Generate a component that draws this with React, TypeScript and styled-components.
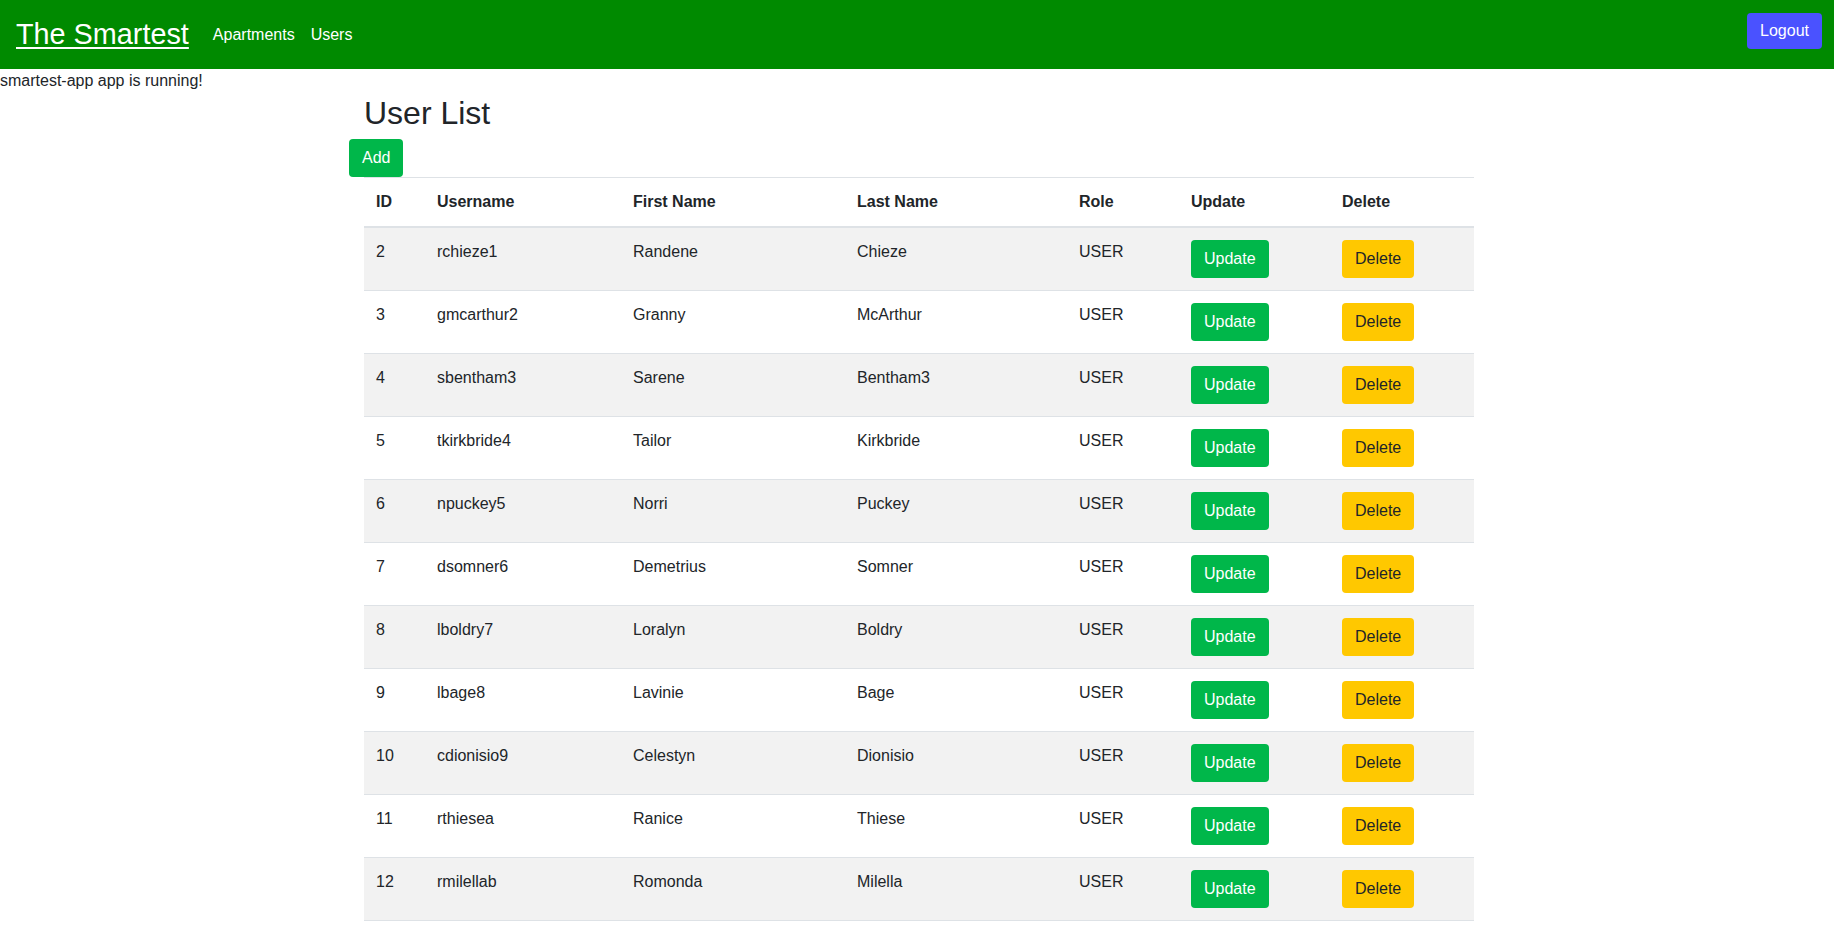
import React from "react";
import styled, { createGlobalStyle } from "styled-components";

const GlobalStyle = createGlobalStyle`
  html, body { margin: 0; padding: 0; background: #fff; }
  body {
    font-family: "Liberation Sans", Arial, sans-serif;
    font-size: 16px;
    line-height: 1.5;
    color: #212529;
  }
  * { box-sizing: border-box; }
`;

const NavBar = styled.nav`
  height: 69px;
  background: #008a00;
  display: flex;
  align-items: center;
  padding: 0 12px 0 16px;
`;

const Brand = styled.a`
  color: #fff;
  font-size: 28.8px;
  line-height: 40px;
  text-decoration: underline;
  text-decoration-thickness: 2px;
  text-underline-offset: 3px;
  margin-right: 16px;
  margin-top: -1px;
  cursor: pointer;
`;

const NavLink = styled.a`
  color: #fff;
  font-size: 16px;
  line-height: 24px;
  padding: 0 8px;
  margin-top: 0;
  text-decoration: none;
  cursor: pointer;
`;

const Spacer = styled.div`
  flex: 1;
`;

const Btn = styled.button<{ $variant: "green" | "yellow" | "blue" }>`
  font-family: inherit;
  font-size: 16px;
  line-height: 24px;
  padding: 6px 12px;
  border: 1px solid transparent;
  border-radius: 4px;
  cursor: pointer;
  background: ${(p) =>
    p.$variant === "green" ? "#00b74a" : p.$variant === "yellow" ? "#ffc800" : "#4a52ff"};
  color: ${(p) => (p.$variant === "yellow" ? "#212529" : "#fff")};
`;

const LogoutBtn = styled(Btn)`
  align-self: flex-start;
  margin-top: 13px;
  padding: 5px 12px;
`;

const Status = styled.div`
  line-height: 24px;
`;

const Container = styled.main`
  width: 1140px;
  margin-left: calc(50% - 568px);
  padding: 0 15px;
`;

const Title = styled.h2`
  font-size: 32px;
  font-weight: 500;
  line-height: 1.2;
  margin: 1px 0 7px;
`;

const AddBtn = styled(Btn)`
  margin-left: -15px;
  display: block;
`;

const Table = styled.table`
  width: 100%;
  border-collapse: collapse;
  border-top: 1px solid #dee2e6;
`;

const Th = styled.th<{ $w: number }>`
  width: ${(p) => p.$w}px;
  text-align: left;
  font-weight: 700;
  padding: 12px;
  border-bottom: 2px solid #dee2e6;
  vertical-align: bottom;
`;

const Row = styled.tr<{ $striped: boolean }>`
  background: ${(p) => (p.$striped ? "#f2f2f2" : "transparent")};
`;

const Td = styled.td`
  padding: 12px;
  border-bottom: 1px solid #dee2e6;
  vertical-align: top;
`;

const users = [
  [2, "rchieze1", "Randene", "Chieze"],
  [3, "gmcarthur2", "Granny", "McArthur"],
  [4, "sbentham3", "Sarene", "Bentham3"],
  [5, "tkirkbride4", "Tailor", "Kirkbride"],
  [6, "npuckey5", "Norri", "Puckey"],
  [7, "dsomner6", "Demetrius", "Somner"],
  [8, "lboldry7", "Loralyn", "Boldry"],
  [9, "lbage8", "Lavinie", "Bage"],
  [10, "cdionisio9", "Celestyn", "Dionisio"],
  [11, "rthiesea", "Ranice", "Thiese"],
  [12, "rmilellab", "Romonda", "Milella"],
] as const;

const cols: [string, number][] = [
  ["ID", 61],
  ["Username", 196],
  ["First Name", 224],
  ["Last Name", 222],
  ["Role", 112],
  ["Update", 151],
  ["Delete", 144],
];

export default function App() {
  return (
    <>
      <GlobalStyle />
      <NavBar>
        <Brand>The Smartest</Brand>
        <NavLink>Apartments</NavLink>
        <NavLink>Users</NavLink>
        <Spacer />
        <LogoutBtn $variant="blue">Logout</LogoutBtn>
      </NavBar>
      <Status>smartest-app app is running!</Status>
      <Container>
        <Title>User List</Title>
        <AddBtn $variant="green">Add</AddBtn>
        <Table>
          <thead>
            <tr>
              {cols.map(([c, w]) => (
                <Th key={c} $w={w}>
                  {c}
                </Th>
              ))}
            </tr>
          </thead>
          <tbody>
            {users.map((u, i) => (
              <Row key={u[0]} $striped={i % 2 === 0}>
                <Td>{u[0]}</Td>
                <Td>{u[1]}</Td>
                <Td>{u[2]}</Td>
                <Td>{u[3]}</Td>
                <Td>USER</Td>
                <Td>
                  <Btn $variant="green">Update</Btn>
                </Td>
                <Td>
                  <Btn $variant="yellow">Delete</Btn>
                </Td>
              </Row>
            ))}
          </tbody>
        </Table>
      </Container>
    </>
  );
}
